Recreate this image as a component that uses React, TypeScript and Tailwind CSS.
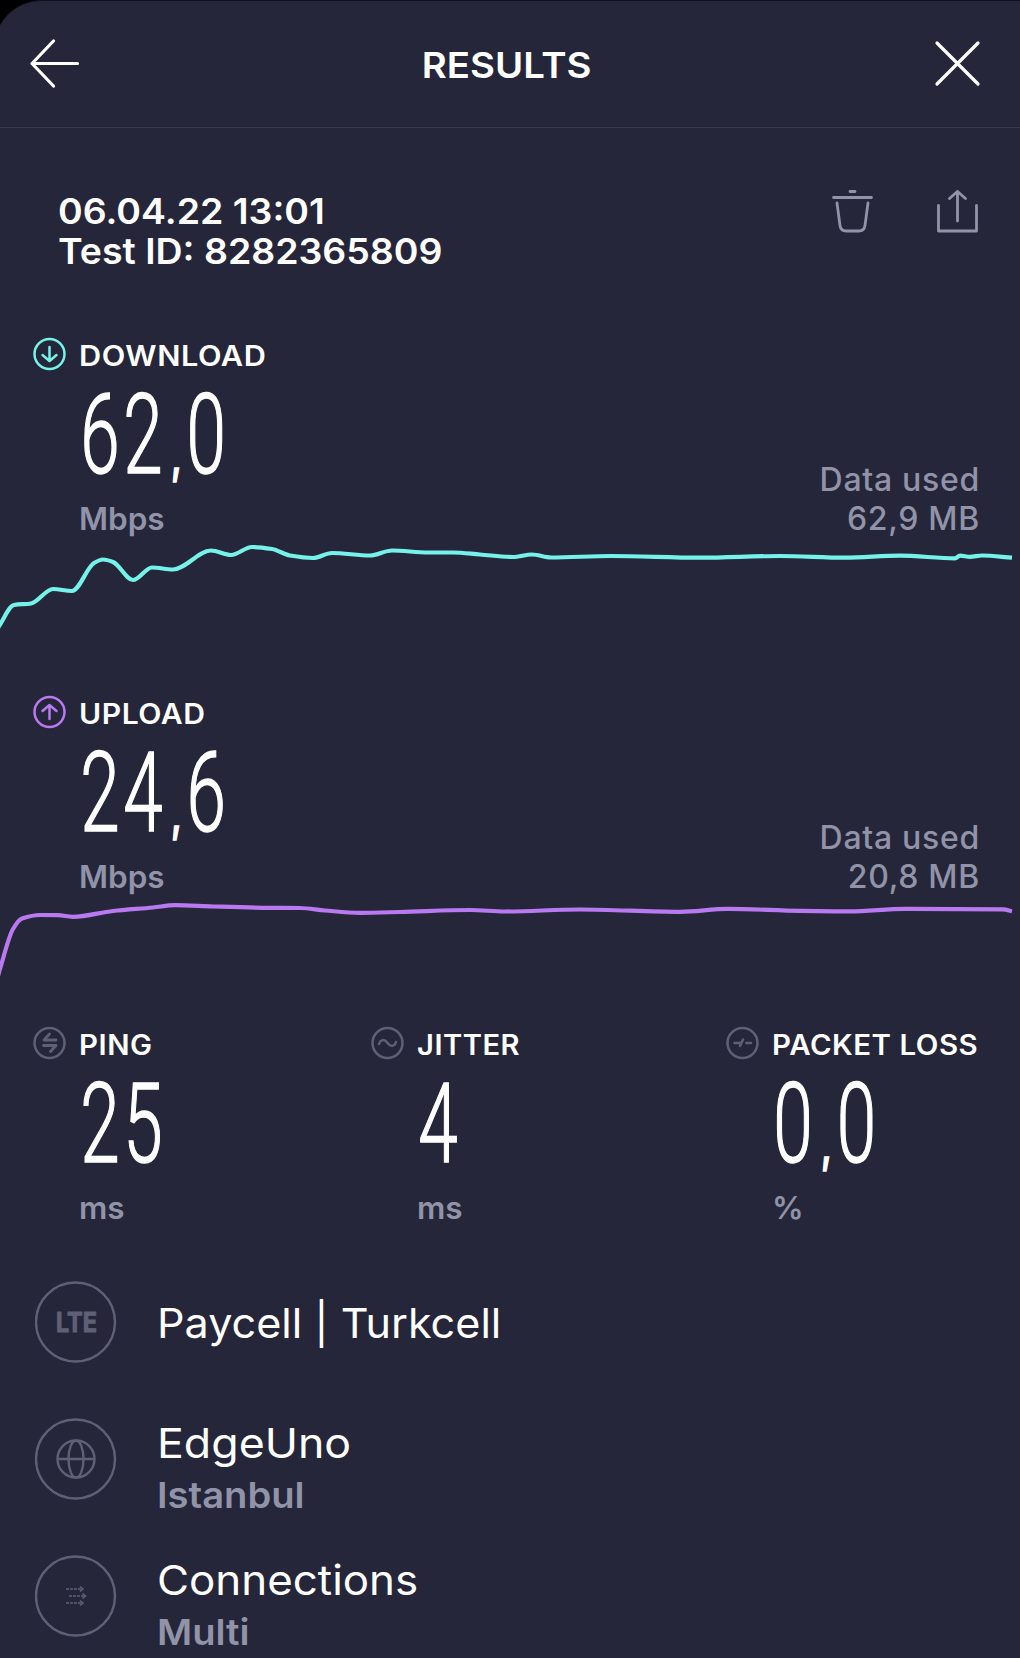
import type { ReactNode } from "react";

type Point = [number, number];

const downloadPoints: Point[] = [
  [-2, 88], [0, 84.5], [14, 65], [31, 63.5], [53, 49], [72, 51], [94, 23], [103, 19.5], [113, 22], [133, 40],
  [152, 27.5], [173, 29.5], [211, 10.5], [231, 15], [252, 7], [272, 9], [290, 15.5], [313, 18], [332, 13],
  [370, 15.5], [392, 10.5], [428, 12.5], [453, 12.5], [480, 14.5], [513, 17], [532, 14.5], [551, 17.5],
  [611, 16], [700, 17.7], [780, 16], [845, 17.7], [900, 15.7], [955, 18.3], [960, 15.7], [970, 16.8],
  [982, 15.5], [1012, 17.7],
];

const uploadPoints: Point[] = [
  [-2, 78], [0, 71], [13, 31], [22, 20.5], [40, 17], [58, 17.2], [73, 18.8], [113, 13], [153, 9.5], [175, 7.2],
  [213, 8.5], [270, 9.8], [300, 10], [325, 12.5], [360, 14.8], [400, 14], [470, 12], [505, 13.5], [580, 11.5],
  [680, 13.8], [728, 10.9], [800, 12.9], [850, 13.4], [905, 10.8], [1003, 11.3], [1012, 13.3],
];

// smooth line: tangents are flat at local peaks, averaged elsewhere
function toPath(points: Point[]) {
  const slope = (a: Point, b: Point) => (b[1] - a[1]) / (b[0] - a[0]);
  const tangents = points.map((p, i) => {
    if (i === 0) return slope(p, points[1]);
    if (i === points.length - 1) return slope(points[i - 1], p);
    const before = slope(points[i - 1], p);
    const after = slope(p, points[i + 1]);
    return before * after <= 0 ? 0 : (2 * before * after) / (before + after);
  });
  let d = `M${points[0][0]} ${points[0][1]}`;
  for (let i = 1; i < points.length; i++) {
    const [x0, y0] = points[i - 1];
    const [x1, y1] = points[i];
    const h = (x1 - x0) / 3;
    d += `C${x0 + h} ${y0 + tangents[i - 1] * h} ${x1 - h} ${y1 - tangents[i] * h} ${x1} ${y1}`;
  }
  return d;
}

function RoundIcon({ children, className }: { children: ReactNode; className: string }) {
  return (
    <svg
      viewBox="0 0 34 34"
      className={`mt-px size-[34px] shrink-0 fill-none stroke-current ${className}`}
      strokeWidth="2.5"
      strokeLinecap="round"
      strokeLinejoin="round"
    >
      <circle cx="17.5" cy="17" r="15" />
      {children}
    </svg>
  );
}

function Metric({
  icon,
  label,
  labelClass,
  value,
  unit,
}: {
  icon: ReactNode;
  label: string;
  labelClass: string;
  value: string;
  unit: string;
}) {
  const [whole, decimals] = value.split(",");

  return (
    <div className="flex items-start gap-[13px]">
      {icon}
      <div className="whitespace-nowrap">
        <div className={`mt-[3px] origin-left text-[28px] leading-[34px] font-semibold tracking-[0.5px] text-white ${labelClass}`}>
          {label}
        </div>
        <div className="mt-[12px] h-[100px] origin-left scale-x-[0.64] pl-[2px] font-[Roboto,sans-serif] text-[111px] leading-[100px] font-light tracking-[5.5px] text-white [-webkit-text-stroke:1.5px_white]">
          {whole}
          {decimals && (
            <>
              <span className="inline-block w-[32px] text-center font-[Inter,sans-serif] text-[46px] leading-none font-bold tracking-normal">
                ,
              </span>
              {decimals}
            </>
          )}
        </div>
        <div className="mt-[14px] text-[31.5px] leading-[40px] font-semibold text-[#9193a8]">{unit}</div>
      </div>
    </div>
  );
}

function SpeedSection({
  metric,
  used,
  points,
  className,
}: {
  metric: ReactNode;
  used: string;
  points: Point[];
  className: string;
}) {
  return (
    <section className={className}>
      <div className="flex h-[204px] items-end justify-between pr-10 pl-8">
        <div className="h-full">{metric}</div>
        <div className="pb-[2px] text-right text-[32px] leading-[39px] font-medium tracking-[0.7px] text-[#9193a8]">
          <div>Data used</div>
          <div>{used}</div>
        </div>
      </div>
      <svg viewBox="0 0 1020 100" className="block h-[100px] w-full fill-none stroke-current" strokeWidth="4.2">
        <path d={toPath(points)} />
      </svg>
    </section>
  );
}

function InfoRow({
  icon,
  title,
  titleClass,
  subtitle,
}: {
  icon: ReactNode;
  title: string;
  titleClass: string;
  subtitle?: string;
}) {
  return (
    <div className="flex h-[137px] items-start gap-[40px] pl-[35px] whitespace-nowrap">
      <svg viewBox="0 0 82 82" className="size-[82px] shrink-0 fill-none stroke-[#5f6077]" strokeWidth="2.4">
        <circle cx="40.5" cy="41" r="39.5" />
        {icon}
      </svg>
      <div className={subtitle ? "" : "mt-[17px]"}>
        <div className={`origin-left text-[41px] leading-[50px] text-white ${titleClass}`}>{title}</div>
        {subtitle && (
          <div className="mt-[4px] origin-left scale-x-[1.06] text-[36px] leading-[46px] font-semibold text-[#9193a8]">
            {subtitle}
          </div>
        )}
      </div>
    </div>
  );
}

export default function App() {
  return (
    <div className="h-[1658px] w-[1020px] overflow-hidden bg-black font-[Inter,sans-serif]">
      <div className="-ml-1.5 h-full rounded-tl-[48px] border-t border-[#10101f] bg-[#252639] pl-1.5">
        <header className="flex h-[127px] items-center justify-between border-b border-[#3a3b50] pr-[39px] pl-[29px]">
          <svg viewBox="0 0 52 52" className="size-[52px] fill-none stroke-white" strokeWidth="3.2" strokeLinecap="round" strokeLinejoin="round">
            <path d="M48.5 25.5H3M24.5 3L3 25.5L24.5 48" />
          </svg>
          <h1 className="mt-px scale-x-[1.065] text-[36px] font-semibold text-white">RESULTS</h1>
          <svg viewBox="0 0 48 48" className="size-[48px] fill-none stroke-white" strokeWidth="3.2" strokeLinecap="round">
            <path d="M4 3L45 44M45 3L4 44" />
          </svg>
        </header>

        <div className="flex h-[208px] items-start justify-between pt-[61px] pr-[41px] pl-[58px]">
          <div className="mt-[2px] origin-left scale-x-[1.04] text-[36px] leading-[40px] font-semibold whitespace-nowrap text-white">
            <div>06.04.22 13:01</div>
            <div>Test ID: 8282365809</div>
          </div>
          <div className="flex gap-[61px] text-[#9193a8]">
            <svg viewBox="0 0 44 44" className="size-11 fill-none stroke-current" strokeWidth="2.8" strokeLinecap="round" strokeLinejoin="round">
              <path d="M20 2.5h5M3.5 8.5h38M7 14l3 22.5q.8 5.5 6.2 5.5h12.6q5.4 0 6.2-5.5l3-22.5" />
            </svg>
            <svg viewBox="0 0 44 44" className="size-11 fill-none stroke-current" strokeWidth="2.8" strokeLinecap="round" strokeLinejoin="round">
              <path d="M3.5 16.5V42h38V16.5M22.5 32V2.5M14.5 9.5l8-7l8 7" />
            </svg>
          </div>
        </div>

        <SpeedSection
          className="h-[358px] text-[#75f3ea]"
          used="62,9 MB"
          points={downloadPoints}
          metric={
            <Metric
              label="DOWNLOAD"
              labelClass="scale-x-[1.095]"
              value="62,0"
              unit="Mbps"
              icon={
                <RoundIcon className="text-[#75f3ea]">
                  <path d="M17.5 10v14M10.5 18l7 6l7-6" />
                </RoundIcon>
              }
            />
          }
        />
        <SpeedSection
          className="h-[331px] text-[#b979f0]"
          used="20,8 MB"
          points={uploadPoints}
          metric={
            <Metric
              label="UPLOAD"
              labelClass="scale-x-[1.075]"
              value="24,6"
              unit="Mbps"
              icon={
                <RoundIcon className="text-[#b979f0]">
                  <path d="M17.5 24V10M10.5 16l7-6l7 6" />
                </RoundIcon>
              }
            />
          }
        />

        <div className="grid h-[256px] grid-cols-[338px_355px_auto] pl-8">
          <Metric
            label="PING"
            labelClass="scale-x-[1.05]"
            value="25"
            unit="ms"
            icon={
              <RoundIcon className="text-[#5f6077]">
                <path d="M24 14H12l5.5-6M11.5 19.5H24l-5.500 6" strokeWidth="2.8" />
              </RoundIcon>
            }
          />
          <Metric
            label="JITTER"
            labelClass="scale-x-[1.04]"
            value="4"
            unit="ms"
            icon={
              <RoundIcon className="text-[#5f6077]">
                <path d="M9 18c1.500-5 5.500-5 8.500-1s7 4 8.500-1" />
              </RoundIcon>
            }
          />
          <Metric
            label="PACKET LOSS"
            labelClass="scale-x-[1.05]"
            value="0,0"
            unit="%"
            icon={
              <RoundIcon className="text-[#5f6077]">
                <path d="M9.5 17h6M15 20l3-6.5M21.5 17H26" />
              </RoundIcon>
            }
          />
        </div>

        <InfoRow
          title="Paycell | Turkcell"
          titleClass="scale-x-[1.052]"
          icon={
            <text
              x="21"
              y="51"
              textLength="41"
              lengthAdjust="spacingAndGlyphs"
              className="fill-[#5f6077] stroke-[#5f6077] stroke-1 text-[27px] font-bold"
            >
              LTE
            </text>
          }
        />
        <InfoRow
          title="EdgeUno"
          titleClass="scale-x-[1.09]"
          subtitle="Istanbul"
          icon={
            <>
              <circle cx="41" cy="41" r="18.5" />
              <ellipse cx="41" cy="41" rx="7.5" ry="18.5" />
              <path d="M22.5 41h37" />
            </>
          }
        />
        <InfoRow
          title="Connections"
          titleClass="scale-x-[1.07]"
          subtitle="Multi"
          icon={
            <g strokeWidth="1.6">
              <path d="M31 34h16M34 41h15M31 48h16" strokeDasharray="3 1" />
              <path d="M45 31.5l3 2.5l-3 2.5M47.5 38.5l3 2.5l-3 2.5M45 45.5l3 2.5l-3 2.5" />
            </g>
          }
        />
      </div>
    </div>
  );
}
